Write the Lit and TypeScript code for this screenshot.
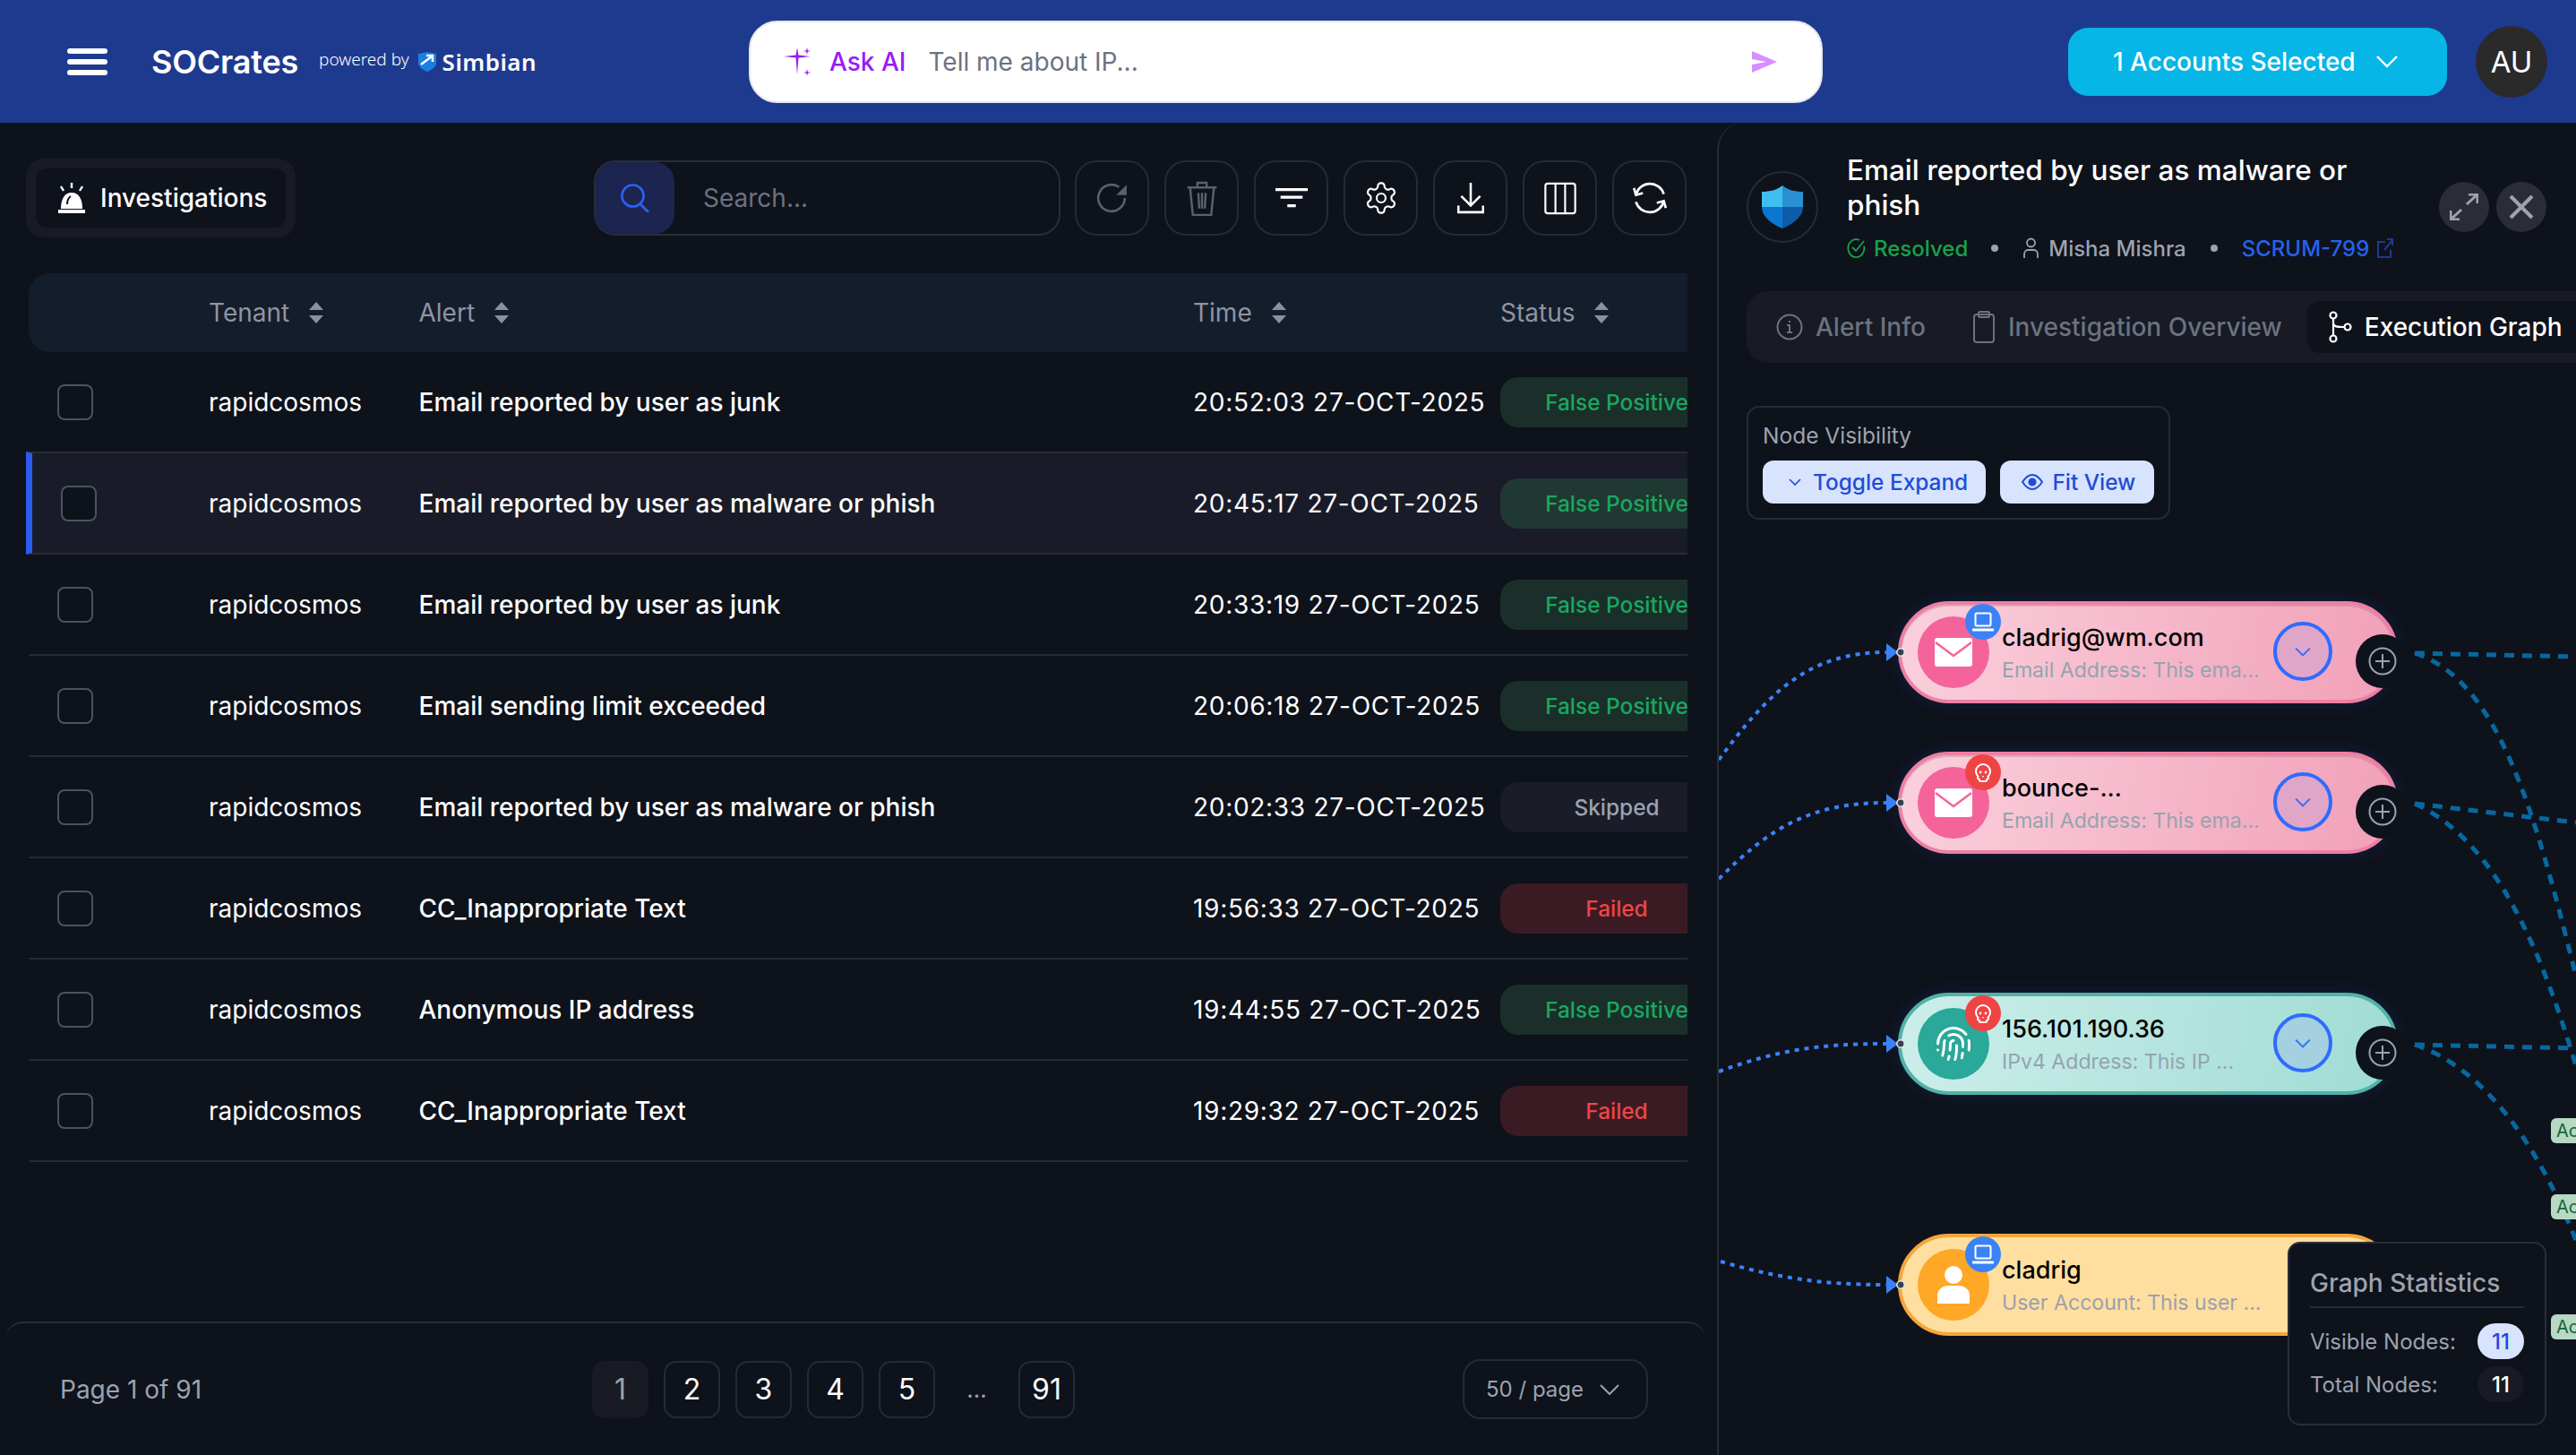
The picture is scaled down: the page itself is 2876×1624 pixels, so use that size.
import { LitElement, html, css, svg } from 'lit';
import { customElement } from 'lit/decorators.js';

interface Row {
  time: string;
  alert: string;
  status: 'ok' | 'skip' | 'fail';
  selected?: boolean;
}

const ROWS: Row[] = [
  { time: '20:52:03 27-OCT-2025', alert: 'Email reported by user as junk', status: 'ok' },
  { time: '20:45:17 27-OCT-2025', alert: 'Email reported by user as malware or phish', status: 'ok', selected: true },
  { time: '20:33:19 27-OCT-2025', alert: 'Email reported by user as junk', status: 'ok' },
  { time: '20:06:18 27-OCT-2025', alert: 'Email sending limit exceeded', status: 'ok' },
  { time: '20:02:33 27-OCT-2025', alert: 'Email reported by user as malware or phish', status: 'skip' },
  { time: '19:56:33 27-OCT-2025', alert: 'CC_Inappropriate Text', status: 'fail' },
  { time: '19:44:55 27-OCT-2025', alert: 'Anonymous IP address', status: 'ok' },
  { time: '19:29:32 27-OCT-2025', alert: 'CC_Inappropriate Text', status: 'fail' },
];

const STATUS_LABEL = { ok: 'False Positive', skip: 'Skipped', fail: 'Failed' };

interface GraphNode {
  name: string;
  sub: string;
  y: number;
  tone: 'pink' | 'teal' | 'amber';
  icon: 'mail' | 'print' | 'user';
  badge: 'laptop' | 'skull';
}

const NODES: GraphNode[] = [
  { name: 'cladrig@wm.com', sub: 'Email Address: This ema...', y: 671, tone: 'pink', icon: 'mail', badge: 'laptop' },
  { name: 'bounce-...', sub: 'Email Address: This ema...', y: 839, tone: 'pink', icon: 'mail', badge: 'skull' },
  { name: '156.101.190.36', sub: 'IPv4 Address: This IP ...', y: 1108, tone: 'teal', icon: 'print', badge: 'skull' },
  { name: 'cladrig', sub: 'User Account: This user ...', y: 1377, tone: 'amber', icon: 'user', badge: 'laptop' },
];

const GEAR =
  'M12.22 2h-.44a2 2 0 0 0-2 2v.18a2 2 0 0 1-1 1.73l-.43.25a2 2 0 0 1-2 0l-.15-.08a2 2 0 0 0-2.73.73l-.22.38a2 2 0 0 0 .73 2.73l.15.1a2 2 0 0 1 1 1.72v.51a2 2 0 0 1-1 1.74l-.15.09a2 2 0 0 0-.73 2.73l.22.38a2 2 0 0 0 2.73.73l.15-.08a2 2 0 0 1 2 0l.43.25a2 2 0 0 1 1 1.73V20a2 2 0 0 0 2 2h.44a2 2 0 0 0 2-2v-.18a2 2 0 0 1 1-1.73l.43-.25a2 2 0 0 1 2 0l.15.08a2 2 0 0 0 2.73-.73l.22-.39a2 2 0 0 0-.73-2.73l-.15-.08a2 2 0 0 1-1-1.74v-.5a2 2 0 0 1 1-1.74l.15-.09a2 2 0 0 0 .73-2.73l-.22-.38a2 2 0 0 0-2.73-.73l-.15.08a2 2 0 0 1-2 0l-.43-.25a2 2 0 0 1-1-1.73V4a2 2 0 0 0-2-2z';

const sortIcon = html`<svg class="sort" viewBox="0 0 16 24"><path d="M8 0l8 9H0zM8 24l8-9H0z" /></svg>`;

const toolIcons = [
  // reload, dimmed
  html`<svg class="ti dim" viewBox="0 0 34 34"><path d="M30 17a14 14 0 1 1-6-11.5" /><path class="solid" d="M32 3v11H21z" /></svg>`,
  // trash, dimmed
  html`<svg class="ti dim tall" viewBox="0 0 34 38"><path d="M1 7h32M12 7V2h10v5M4 7l3 30h20l3-30M13 13l1 17M21 13l-1 17M17 13v17" /></svg>`,
  // filter lines
  html`<svg class="ti" viewBox="0 0 38 24"><path class="thick" d="M0 2h38M6 11h26M14 21h10" /></svg>`,
  html`<svg class="ti big" viewBox="0 0 24 24" style="stroke-width:1.3"><path d="${GEAR}" /><circle cx="12" cy="12" r="3" /></svg>`,
  // download to tray
  html`<svg class="ti" viewBox="0 0 30 34"><path d="M15 1v24M5 15l10 10 10-10M2 25v7h26v-7" /></svg>`,
  // columns
  html`<svg class="ti tall" viewBox="0 0 40 40"><rect x="1.5" y="1.5" width="37" height="37" rx="3" /><path d="M14 1.5v37M26 1.5v37" /></svg>`,
  // sync arrows
  html`<svg class="ti big" viewBox="0 0 36 36"><path d="M4 15a14.5 14.5 0 0 1 28-1M32 21a14.5 14.5 0 0 1-28 1" /><path d="M2 8l2 7 7-2M34 28l-2-7-7 2" /></svg>`,
];

const FINGERPRINT = [
  'M12 10a2 2 0 0 0-2 2c0 1.02-.1 2.51-.26 4',
  'M14 13.12c0 2.38 0 6.38-1 8.88',
  'M17.29 21.02c.12-.6.43-2.3.5-3.02',
  'M2 12a10 10 0 0 1 18-6',
  'M2 16h.01',
  'M21.8 16c.2-2 .131-5.354 0-6',
  'M5 19.5C5.5 18 6 15 6 12a6 6 0 0 1 .34-2',
  'M8.65 22c.21-.66.45-1.32.57-2',
  'M9 6.8a6 6 0 0 1 9 5.2v2',
];

// dashed edges, drawn in page coordinates through the viewBox
const EDGES_IN = [
  'M1919 848C1975 772 2020 728 2106 728',
  'M1919 981C1975 925 2020 896 2106 896',
  'M1919 1196C1985 1172 2030 1165 2106 1165',
  'M1921 1408C1980 1425 2030 1434 2106 1434',
];
const EDGES_OUT = [
  'M2696 729L2876 733',
  'M2696 729C2790 760 2830 905 2876 1090',
  'M2696 897L2876 918',
  'M2696 897C2790 940 2840 1070 2876 1190',
  'M2696 1166L2876 1170',
  'M2696 1166C2780 1195 2840 1290 2880 1395',
];

@customElement('app-root')
export class AppRoot extends LitElement {
  static styles = css`
    :host {
      display: block;
      width: 2876px;
      height: 1624px;
      overflow: hidden;
      background: #0e121b;
      color: #fff;
      font-family: Inter, 'Liberation Sans', sans-serif;
      font-size: 28px;
    }
    svg {
      display: block;
      flex: none;
    }

    /* top bar */
    .top {
      height: 137px;
      background: #1e3a8f;
      display: grid;
      grid-template-columns: 761px 1199px 1fr;
      align-items: center;
      padding: 0 32px 0 75px;
      box-sizing: border-box;
    }
    .brand {
      display: flex;
      align-items: center;
    }
    .burger {
      width: 45px;
      height: 30px;
      margin-right: 49px;
    }
    .name {
      font-size: 36px;
      font-weight: 600;
      letter-spacing: -0.2px;
      margin-right: 23px;
    }
    .powered {
      font: 300 19px 'Noto Sans', sans-serif;
      margin: -6px 10px 0 0;
    }
    .simbian {
      font: 600 26px 'Noto Sans', sans-serif;
      letter-spacing: 0.5px;
      margin-left: 7px;
    }
    .ask {
      height: 92px;
      box-sizing: border-box;
      background: #fff;
      border: 2px solid #e5e7eb;
      border-radius: 32px;
      display: flex;
      align-items: center;
      padding: 0 49px 0 37px;
    }
    .ask-label {
      color: #9a1cf5;
      font-weight: 500;
      margin: 0 25px 0 21px;
    }
    .ask-hint {
      color: #6b7280;
      flex: 1;
    }
    .account {
      display: flex;
      justify-content: flex-end;
      align-items: center;
      gap: 32px;
    }
    .acc-btn {
      width: 423px;
      height: 76px;
      box-sizing: border-box;
      border-radius: 22px;
      background: #06b6e6;
      display: flex;
      align-items: center;
      padding-left: 50px;
      gap: 23px;
      font-weight: 500;
    }
    .avatar {
      width: 80px;
      height: 80px;
      border-radius: 50%;
      background: #2a2a2a;
      display: flex;
      align-items: center;
      justify-content: center;
      font-size: 33px;
    }

    /* page body */
    .body {
      display: flex;
      height: 1487px;
    }
    .left {
      width: 1917px;
      box-sizing: border-box;
      padding: 40px 33px 0 29px;
      display: flex;
      flex-direction: column;
    }
    .toolbar {
      display: flex;
      align-items: center;
      height: 88px;
      margin-bottom: 40px;
    }
    .crumb {
      width: 301px;
      height: 88px;
      box-sizing: border-box;
      padding: 11px;
      background: #181a24;
      border-radius: 20px;
      margin-right: 333px;
    }
    .crumb div {
      height: 66px;
      background: #0e121b;
      border-radius: 12px;
      display: flex;
      align-items: center;
      padding-left: 25px;
      gap: 17px;
      font-weight: 500;
    }
    .search {
      width: 521px;
      height: 84px;
      box-sizing: border-box;
      border: 2px solid #2a2d38;
      border-radius: 24px;
      display: flex;
      align-items: center;
      color: #6b7280;
      margin-right: 16px;
    }
    .search-icon {
      width: 88px;
      height: 80px;
      background: #1b2550;
      border-radius: 22px;
      display: flex;
      align-items: center;
      justify-content: center;
      margin-right: 32px;
    }
    .tool {
      width: 83px;
      height: 84px;
      box-sizing: border-box;
      border: 2px solid #262a35;
      border-radius: 24px;
      display: flex;
      align-items: center;
      justify-content: center;
      margin-right: 17px;
    }
    .tool:last-child {
      margin-right: 0;
    }
    .ti {
      width: 36px;
      height: 36px;
      fill: none;
      stroke: #fff;
      stroke-width: 2.4;
    }
    .ti.big {
      width: 40px;
      height: 40px;
    }
    .ti.tall {
      height: 39px;
    }
    .ti.dim {
      stroke: #5b606c;
    }
    .ti .solid {
      fill: #5b606c;
      stroke: none;
    }
    .ti .thick {
      stroke-width: 3.4;
    }

    /* table */
    .row {
      display: grid;
      grid-template-columns: 201px 234.5px 864.5px 343px 209px;
      align-items: center;
      margin-left: 3px;
      overflow: hidden;
    }
    .head {
      height: 88px;
      flex: none;
      background: #141d2b;
      border-radius: 24px 0 0 24px;
      color: #8f94a3;
    }
    .head span {
      display: flex;
      align-items: center;
      gap: 22px;
    }
    .sort {
      width: 16px;
      height: 24px;
      fill: #8b90a0;
    }
    .item {
      height: 113px;
      flex: none;
      box-sizing: border-box;
      border-bottom: 2px solid #262a35;
      font-weight: 500;
    }
    .item.on {
      margin-left: 0;
      grid-template-columns: 197px 234.5px 864.5px 343px 209px;
      background: #191c28;
      border-left: 7px solid #2a5bf0;
      border-top: 2px solid #2a2d38;
      border-bottom-color: #2a2d38;
      margin-top: -2px;
      height: 115px;
    }
    .check {
      width: 40px;
      height: 40px;
      box-sizing: border-box;
      border: 2px solid #4b5260;
      border-radius: 8px;
      margin-left: 32px;
    }
    .on .check {
      background: #0e121b;
    }
    .tenant {
      font-weight: 400;
    }
    .time {
      font-weight: 400;
      letter-spacing: 0.7px;
    }
    .pill {
      width: 260px;
      height: 56px;
      border-radius: 20px;
      display: flex;
      align-items: center;
      justify-content: center;
      font-size: 24.4px;
      white-space: nowrap;
    }
    .ok {
      background: #1a2f2a;
      color: #19a85f;
    }
    .on .ok {
      background: #203832;
    }
    .skip {
      background: #1a1c27;
      color: #9ca3af;
    }
    .fail {
      background: #3a1b24;
      color: #ef4444;
    }

    /* pager */
    .pager {
      margin: auto -20px 0 -23px;
      height: 149px;
      box-sizing: border-box;
      border-top: 2px solid #2a2d38;
      border-radius: 20px 20px 0 0;
      display: grid;
      grid-template-columns: 655px 972px 207px;
      align-items: center;
      color: #9ca3af;
    }
    .count {
      padding-left: 61px;
    }
    .pages {
      display: flex;
      gap: 17px;
      color: #fff;
    }
    .pages span {
      width: 63px;
      height: 64px;
      box-sizing: border-box;
      border: 2px solid #262a35;
      border-radius: 14px;
      display: flex;
      align-items: center;
      justify-content: center;
      font-size: 32px;
    }
    .pages .cur {
      background: #181a24;
      border-color: #181a24;
      color: #9ca3af;
    }
    .pages .gap {
      width: 59px;
      border: 0;
      color: #9ca3af;
      font-size: 26px;
    }
    .size {
      height: 67px;
      box-sizing: border-box;
      border: 2px solid #262a35;
      border-radius: 20px;
      display: flex;
      align-items: center;
      padding-left: 24px;
      gap: 18px;
      font-size: 24px;
    }

    /* right panel */
    .right {
      flex: 1;
      min-width: 0;
      border-left: 2px solid #262a35;
      border-top-left-radius: 30px;
      display: flex;
      flex-direction: column;
      overflow: hidden;
    }
    .detail {
      display: flex;
      align-items: center;
      padding: 33px 33px 0 31px;
      height: 126px;
    }
    .shield {
      width: 80px;
      height: 80px;
      box-sizing: border-box;
      border: 2px solid #262a35;
      border-radius: 50%;
      display: flex;
      align-items: center;
      justify-content: center;
      margin: -5px 32px 0 0;
    }
    .info {
      flex: 1;
    }
    .title {
      font-size: 31.5px;
      font-weight: 500;
      line-height: 39px;
      max-width: 600px;
    }
    .meta {
      display: flex;
      align-items: center;
      height: 38px;
      margin-top: 10px;
      font-size: 24px;
      font-weight: 500;
      color: #9ca3af;
    }
    .resolved {
      color: #16a34a;
      margin: 0 26px 0 9px;
    }
    .dot {
      width: 8px;
      height: 8px;
      border-radius: 50%;
      background: #9ca3af;
    }
    .user {
      margin-left: 28px;
    }
    .owner {
      margin: 0 27px 0 11px;
    }
    .ticket {
      color: #2563eb;
      margin: 0 9px 0 27px;
    }
    .round {
      width: 56px;
      height: 56px;
      border-radius: 50%;
      background: #2a2d38;
      display: flex;
      align-items: center;
      justify-content: center;
      margin: -5px 0 0 8px;
    }
    .tabs {
      flex: none;
      width: 1000px;
      height: 80px;
      margin: 29px 0 0 31px;
      background: #181a24;
      border-radius: 24px;
      display: flex;
      align-items: center;
      padding-left: 33px;
      box-sizing: border-box;
      color: #6b7280;
      font-weight: 500;
    }
    .tab {
      display: flex;
      align-items: center;
      gap: 14px;
      margin-right: 52px;
    }
    .tab.active {
      height: 58px;
      background: #0e121b;
      border-radius: 14px;
      padding: 0 40px 0 23px;
      color: #fff;
      margin: 0 0 0 -24px;
    }

    /* graph canvas */
    .graph {
      position: relative;
      flex: 1;
    }
    .edges {
      position: absolute;
      left: 0;
      top: 0;
      width: 957px;
      height: 1219px;
      fill: none;
    }
    .in {
      stroke: #3b82f6;
      stroke-width: 4;
      stroke-dasharray: 5 6;
    }
    .out {
      stroke: #07689f;
      stroke-width: 5;
      stroke-dasharray: 11 9;
    }
    .vis {
      position: relative;
      width: 473px;
      height: 127px;
      box-sizing: border-box;
      margin: 48px 0 0 31px;
      border: 2px solid #262a35;
      border-radius: 14px;
      padding: 16px 16px 0;
      font-size: 24.5px;
      color: #9ca3af;
    }
    .vis-row {
      display: flex;
      gap: 16px;
      margin-top: 13px;
    }
    .vis-btn {
      height: 48px;
      box-sizing: border-box;
      background: #d8e3fd;
      border-radius: 12px;
      color: #1d4ed8;
      font-size: 24.4px;
      font-weight: 500;
      display: flex;
      align-items: center;
    }
    .b1 {
      width: 250px;
      padding-left: 29px;
      gap: 13px;
    }
    .b2 {
      width: 172px;
      padding-left: 24px;
      gap: 10px;
    }
    .node {
      position: absolute;
      left: 200px;
      width: 558px;
      height: 114px;
      box-sizing: border-box;
      border: 4px solid;
      border-radius: 57px;
      display: flex;
      align-items: center;
      padding-left: 18px;
    }
    .pink {
      border-color: #ee7fa4;
      background: linear-gradient(100deg, #fad0dc, #f1a0b8);
      box-shadow: 0 0 18px rgba(30, 58, 138, 0.35), inset 0 2px 0 rgba(130, 90, 110, 0.25);
      --icon: #f4649a;
      --chev: #e0a6c8;
    }
    .teal {
      border-color: #52b2a6;
      background: linear-gradient(100deg, #cdeeea, #9fdcd4);
      box-shadow: 0 0 18px rgba(30, 58, 138, 0.35);
      --icon: #2aa899;
      --chev: #a4d0df;
    }
    .amber {
      border-color: #f5a63b;
      background: #ffdf9f;
      --icon: #ffa726;
      --chev: #e0c8a0;
    }
    .disc {
      width: 80px;
      height: 80px;
      border-radius: 50%;
      background: var(--icon);
      display: flex;
      align-items: center;
      justify-content: center;
      flex: none;
    }
    .badge {
      position: absolute;
      left: 71px;
      top: -1px;
      width: 40px;
      height: 40px;
      border-radius: 50%;
      display: flex;
      align-items: center;
      justify-content: center;
    }
    .badge.laptop {
      background: #3b82f6;
    }
    .badge.skull {
      background: #ef4444;
    }
    .txt {
      width: 290px;
      margin: 3px 0 0 14px;
      line-height: 37px;
      white-space: nowrap;
    }
    .nm {
      color: #000;
      font-size: 27px;
      font-weight: 500;
    }
    .sb {
      color: #94a3b0;
      font-size: 23.1px;
    }
    .amber .sb {
      color: #9ca0b0;
    }
    .chev {
      position: absolute;
      left: 415px;
      top: 19px;
      width: 66px;
      height: 66px;
      box-sizing: border-box;
      border: 4px solid #2f6bff;
      border-radius: 50%;
      background: var(--chev);
      display: flex;
      align-items: center;
      justify-content: center;
    }
    .amber .chev {
      display: none;
    }
    .plus {
      position: absolute;
      left: 507px;
      top: 33px;
      width: 60px;
      height: 60px;
      border-radius: 50%;
      background: #0e121b;
      display: flex;
      align-items: center;
      justify-content: center;
    }
    .pin {
      position: absolute;
      left: -17px;
      top: 43px;
      width: 22px;
      height: 20px;
    }
    .tag {
      position: absolute;
      left: 929px;
      width: 100px;
      height: 28px;
      border-radius: 6px;
      background: #b6d8c4;
      color: #166534;
      font-size: 20px;
      line-height: 28px;
      padding-left: 6px;
      box-sizing: border-box;
    }
    .stats {
      position: absolute;
      left: 635px;
      top: 981px;
      width: 289px;
      height: 205px;
      box-sizing: border-box;
      background: #0e121b;
      border: 2px solid #2a2d38;
      border-radius: 14px;
      padding: 0 23px;
      color: #9ca3af;
      font-size: 24px;
    }
    .stats h3 {
      margin: 0 0 17px;
      height: 72px;
      line-height: 88px;
      box-sizing: border-box;
      border-bottom: 2px solid #262a35;
      font-size: 28px;
      font-weight: 500;
    }
    .stat {
      display: flex;
      align-items: center;
      justify-content: space-between;
      margin-bottom: 8px;
    }
    .stat b {
      width: 52px;
      height: 40px;
      border-radius: 20px;
      background: #181a24;
      color: #fff;
      font-weight: 500;
      display: flex;
      align-items: center;
      justify-content: center;
    }
    .stat b.hi {
      background: #d8e3fd;
      color: #1d4ed8;
    }
  `;

  private nodeIcon(icon: GraphNode['icon']) {
    if (icon === 'mail')
      return html`<svg width="42" height="32" viewBox="0 0 42 32">
        <rect width="42" height="32" rx="3" fill="#fff" />
        <path d="M1 5l20 15L41 5" fill="none" stroke="#f4649a" stroke-width="2.5" />
      </svg>`;
    if (icon === 'print')
      return html`<svg width="42" height="42" viewBox="0 0 24 24" fill="none" stroke="#fff" stroke-width="1.7" stroke-linecap="round">
        ${FINGERPRINT.map((d) => svg`<path d="${d}" />`)}
      </svg>`;
    return html`<svg width="36" height="42" viewBox="0 0 36 42" fill="#fff">
      <circle cx="18" cy="10" r="10" />
      <path d="M0 42V33C0 26 6 22 12 22h12c6 0 12 4 12 11v9z" />
    </svg>`;
  }

  private badgeIcon(badge: GraphNode['badge']) {
    if (badge === 'laptop')
      return html`<svg width="24" height="22" viewBox="0 0 24 22" fill="none" stroke="#fff" stroke-width="2">
        <rect x="3.5" y="1.5" width="17" height="14" rx="1.5" />
        <path d="M1 20h22" stroke-width="3" stroke-linecap="round" />
      </svg>`;
    return html`<svg width="24" height="26" viewBox="0 0 24 24" fill="none" stroke="#fff" stroke-width="2">
      <path d="M15 22a1 1 0 0 0 1-1v-1a2 2 0 0 0 1.56-3.25 8 8 0 1 0-11.12 0A2 2 0 0 0 8 20v1a1 1 0 0 0 1 1z" />
      <circle cx="15" cy="12" r="1.4" fill="#fff" stroke="none" />
      <circle cx="9" cy="12" r="1.4" fill="#fff" stroke="none" />
      <path d="M12.5 17l-.5-1-.5 1z" stroke-width="1" />
    </svg>`;
  }

  private renderNode(n: GraphNode) {
    return html`
      <div class="node ${n.tone}" style="top:${n.y - 405}px">
        <svg class="pin" viewBox="0 0 22 20">
          <path d="M0 0l13 10L0 20z" fill="#3b82f6" />
          <circle cx="16" cy="10" r="4.2" fill="#374151" stroke="#e5e7eb" stroke-width="1.6" />
        </svg>
        <div class="disc">${this.nodeIcon(n.icon)}</div>
        <div class="badge ${n.badge}">${this.badgeIcon(n.badge)}</div>
        <div class="txt">
          <div class="nm">${n.name}</div>
          <div class="sb">${n.sub}</div>
        </div>
        <div class="chev">
          <svg width="20" height="11" viewBox="0 0 24 14" fill="none" stroke="#2f6bff" stroke-width="2.4"><path d="M2 2l10 10L22 2" /></svg>
        </div>
        <div class="plus">
          <svg width="32" height="32" viewBox="0 0 32 32" fill="none" stroke="#9ca3af" stroke-width="2">
            <circle cx="16" cy="16" r="14.5" /><path d="M16 8v16M8 16h16" />
          </svg>
        </div>
      </div>
    `;
  }

  private renderLeft() {
    return html`
      <section class="left">
        <div class="toolbar">
          <div class="crumb">
            <div>
              <svg width="30" height="34" viewBox="0 0 30 34" fill="#fff">
                <path d="M0 30h30v4H0zM3 29c0-11 4-18 12-18s12 7 12 18z" />
                <path d="M10 24c0-5 1-7 4-9" fill="none" stroke="#0e121b" stroke-width="2" />
                <path d="M15 0v6M3 4l3 5M27 4l-3 5" fill="none" stroke="#fff" stroke-width="2.4" />
              </svg>
              Investigations
            </div>
          </div>
          <div class="search">
            <div class="search-icon">
              <svg width="32" height="32" viewBox="0 0 32 32" fill="none" stroke="#2a63f5" stroke-width="2.6">
                <circle cx="13.5" cy="13.5" r="12" /><path d="M22 23l9 9" />
              </svg>
            </div>
            Search...
          </div>
          ${toolIcons.map((i) => html`<div class="tool">${i}</div>`)}
        </div>
        <div class="row head">
          <i></i>
          <span>Tenant ${sortIcon}</span>
          <span>Alert ${sortIcon}</span>
          <span>Time ${sortIcon}</span>
          <span>Status ${sortIcon}</span>
        </div>
        ${ROWS.map(
          (r) => html`
            <div class="row item ${r.selected ? 'on' : ''}">
              <div class="check"></div>
              <div class="tenant">rapidcosmos</div>
              <div>${r.alert}</div>
              <div class="time">${r.time}</div>
              <div class="pill ${r.status}">${STATUS_LABEL[r.status]}</div>
            </div>
          `
        )}
        <div class="pager">
          <div class="count">Page 1 of 91</div>
          <div class="pages">
            <span class="cur">1</span><span>2</span><span>3</span><span>4</span><span>5</span>
            <span class="gap">...</span><span>91</span>
          </div>
          <div class="size">
            50 / page
            <svg width="22" height="12" viewBox="0 0 22 12" fill="none" stroke="#9ca3af" stroke-width="2"><path d="M1 1l10 10L21 1" /></svg>
          </div>
        </div>
      </section>
    `;
  }

  private renderRight() {
    return html`
      <section class="right">
        <div class="detail">
          <div class="shield">
            <svg width="48" height="48" viewBox="0 0 48 48">
              <defs>
                <clipPath id="sh"><path d="M24 0C30 5 38 7 47 7V24C47 35 36 43 24 48C12 43 1 35 1 24V7C10 7 18 5 24 0z" /></clipPath>
              </defs>
              <g clip-path="url(#sh)">
                <rect width="24" height="24" fill="#3fbff0" />
                <rect x="24" width="24" height="24" fill="#2a8fd4" />
                <rect y="24" width="24" height="24" fill="#0a78cf" />
                <rect x="24" y="24" width="24" height="24" fill="#0d5da8" />
              </g>
            </svg>
          </div>
          <div class="info">
            <div class="title">Email reported by user as malware or phish</div>
            <div class="meta">
              <svg width="21" height="24" viewBox="0 0 21 24" fill="none" stroke="#16a34a" stroke-width="1.8">
                <path d="M19 9.500A9 10 0 1 1 14 3" /><path d="M6 11l4 4 9-11" />
              </svg>
              <span class="resolved">Resolved</span>
              <i class="dot"></i>
              <svg class="user" width="17" height="24" viewBox="0 0 17 24" fill="none" stroke="#9ca3af" stroke-width="1.8">
                <circle cx="8.500" cy="6" r="4.500" /><path d="M1 23v-4c0-3 2-5 4-5h7c2 0 4 2 4 5v4" />
              </svg>
              <span class="owner">Misha Mishra</span>
              <i class="dot"></i>
              <span class="ticket">SCRUM-799</span>
              <svg width="18" height="22" viewBox="0 0 18 22" fill="none" stroke="#1e3a8f" stroke-width="2">
                <path d="M9 4H1v17h14v-8M8 13L17 2M11 1h6v7" />
              </svg>
            </div>
          </div>
          <div class="round">
            <svg width="32" height="30" viewBox="0 0 32 30" fill="none" stroke="#9ca3af" stroke-width="3">
              <path d="M19 12L31 1M21 1h10v10M13 18L1 29M1 19v10h10" />
            </svg>
          </div>
          <div class="round">
            <svg width="28" height="28" viewBox="0 0 28 28" fill="none" stroke="#9ca3af" stroke-width="4">
              <path d="M2 2l24 24M26 2L2 26" />
            </svg>
          </div>
        </div>
        <div class="tabs">
          <div class="tab">
            <svg width="30" height="30" viewBox="0 0 30 30" fill="none" stroke="#6b7280" stroke-width="2">
              <circle cx="15" cy="15" r="13.500" /><path d="M12 13h3v8M12 21h6M15 8v2" />
            </svg>
            Alert Info
          </div>
          <div class="tab">
            <svg width="26" height="36" viewBox="0 0 26 36" fill="none" stroke="#6b7280" stroke-width="2">
              <rect x="2" y="4" width="22" height="31" rx="3" /><rect x="7" y="1" width="12" height="6" rx="1.500" />
            </svg>
            Investigation Overview
          </div>
          <div class="tab active">
            <svg width="27" height="36" viewBox="0 0 27 36" fill="none" stroke="#fff" stroke-width="2.2">
              <circle cx="6" cy="5" r="3.500" /><circle cx="6" cy="31" r="3.500" /><circle cx="22" cy="18" r="3.500" />
              <path d="M6 9v18M6 14c0 3 3 4 12 4" />
            </svg>
            Execution Graph
          </div>
        </div>
        <div class="graph">
          <svg class="edges" viewBox="1919 405 957 1219">
            ${EDGES_IN.map((d) => svg`<path class="in" d="${d}" />`)}
            ${EDGES_OUT.map((d) => svg`<path class="out" d="${d}" />`)}
          </svg>
          <div class="vis">
            Node Visibility
            <div class="vis-row">
              <div class="vis-btn b1">
                <svg width="14" height="9" viewBox="0 0 14 9" fill="none" stroke="#1d4ed8" stroke-width="1.6"><path d="M1 1l6 6 6-6" /></svg>
                Toggle Expand
              </div>
              <div class="vis-btn b2">
                <svg width="24" height="22" viewBox="0 0 24 22" fill="none" stroke="#1d4ed8" stroke-width="2">
                  <path d="M1 11C5 5 8 3 12 3s7 2 11 8c-4 6-7 8-11 8s-7-2-11-8z" /><circle cx="12" cy="11" r="3.600" fill="#1d4ed8" />
                </svg>
                Fit View
              </div>
            </div>
          </div>
          ${NODES.map((n) => this.renderNode(n))}
          ${[843, 928, 1062].map((t) => html`<div class="tag" style="top:${t}px">Ac</div>`)}
          <div class="stats">
            <h3>Graph Statistics</h3>
            <div class="stat">Visible Nodes: <b class="hi">11</b></div>
            <div class="stat">Total Nodes: <b>11</b></div>
          </div>
        </div>
      </section>
    `;
  }

  render() {
    return html`
      <header class="top">
        <div class="brand">
          <svg class="burger" viewBox="0 0 45 30" fill="#fff">
            <rect width="45" height="6" rx="3" /><rect y="12" width="45" height="6" rx="3" /><rect y="24" width="45" height="6" rx="3" />
          </svg>
          <span class="name">SOCrates</span>
          <span class="powered">powered by</span>
          <svg width="20" height="22" viewBox="0 0 20 22">
            <path d="M0 2L10 0l10 2v10c0 5-5 8-10 10C5 20 0 17 0 12z" fill="#1a7fe0" />
            <path d="M3 14L15 5M9 4h7v7" fill="none" stroke="#fff" stroke-width="2.500" />
          </svg>
          <span class="simbian">Simbian</span>
        </div>
        <div class="ask">
          <svg width="30" height="32" viewBox="0 0 30 32" fill="#9a1cf5">
            <path d="M15 0L16.500 8.500 30 10 16.500 11.500 15 30 13.500 11.500 0 10 13.500 8.500z" />
            <path d="M26 0l.8 3.200L30 4l-3.200.8L26 8l-.8-3.200L22 4l3.200-.8zM26 24l.8 3.200L30 28l-3.200.8L26 32l-.8-3.200L22 28l3.200-.8z" />
          </svg>
          <span class="ask-label">Ask AI</span>
          <span class="ask-hint">Tell me about IP...</span>
          <svg width="28" height="24" viewBox="0 0 28 24" fill="#d68fff"><path d="M0 0l28 12L0 24v-9l16-3L0 9z" /></svg>
        </div>
        <div class="account">
          <div class="acc-btn">
            1 Accounts Selected
            <svg width="24" height="14" viewBox="0 0 24 14" fill="none" stroke="#fff" stroke-width="2.400"><path d="M1 1l11 11L23 1" /></svg>
          </div>
          <div class="avatar">AU</div>
        </div>
      </header>
      <div class="body">${this.renderLeft()}${this.renderRight()}</div>
    `;
  }
}
